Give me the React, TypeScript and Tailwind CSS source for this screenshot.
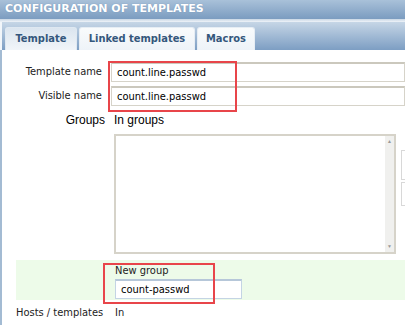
import React from 'react';

const Input: React.FC<{ value: string; className?: string }> = ({ value, className }) => (
  <div
    className={
      'flex h-[20px] items-center border border-t-2 pl-[5px] text-[11px] leading-none text-black ' +
      (className ?? 'border-[#d6d3c9] border-t-[#cbc8bd]')
    }
  >
    {value}
  </div>
);

const Tab: React.FC<{ label: string; active?: boolean; className?: string }> = ({ label, active, className }) => (
  <div
    className={
      'flex h-[23px] items-center justify-center rounded-t-[3px] border border-b-0 text-[11px] font-bold text-[#34577c] ' +
      (active
        ? 'border-[#dfe8f1] bg-gradient-to-b from-[#dbe5ef] to-[#f1f5f9] '
        : 'border-[#e6edf4] bg-gradient-to-b from-[#f9fbfc] to-[#eef3f8] ') +
      (className ?? '')
    }
  >
    {label}
  </div>
);

export default function App() {
  return (
    <div className="relative h-[325px] w-[405px] overflow-hidden bg-white font-['DejaVu_Sans_Condensed','DejaVu_Sans',sans-serif]">
      {/* title bar */}
      <div className="flex h-[19px] items-center bg-gradient-to-b from-[#a9c1d9] to-[#7b9cc0] pl-[5px] font-['DejaVu_Sans',sans-serif] text-[11px] font-bold text-white [text-shadow:0_0_1px_#6b8bb0]">
        CONFIGURATION OF TEMPLATES
      </div>
      <div className="h-[3px] bg-gradient-to-b from-[#c9d7e5] to-[#eef3f8]" />

      {/* tabs */}
      <div className="flex h-[28px] items-end gap-[2px] border-l-2 border-[#f2f6fa] bg-gradient-to-b from-[#c6d6e6] to-[#7d9ec3] pl-[3px]">
        <Tab label="Template" active className="w-[72px]" />
        <Tab label="Linked templates" className="w-[116px]" />
        <Tab label="Macros" className="w-[58px]" />
      </div>

      {/* form */}
      <div className="relative h-[280px] border-l-2 border-[#a3bbd3] pt-[12px] text-[11px] text-[#222]">
        <div className="flex h-[20px] items-center">
          <div className="w-[102px] text-right">Template name</div>
          <Input value="count.line.passwd" className="ml-[9px] w-[300px] border-[#d6d3c9] border-t-[#cbc8bd] bg-white" />
        </div>
        <div className="mt-[4px] flex h-[20px] items-center">
          <div className="w-[102px] text-right">Visible name</div>
          <Input value="count.line.passwd" className="ml-[9px] w-[300px] border-[#d6d3c9] border-t-[#cbc8bd] bg-white" />
        </div>

        <div className="mt-[6px] flex font-['Liberation_Sans',sans-serif] text-[12px] leading-[16px] text-black">
          <div className="w-[104px] text-right">Groups</div>
          <div className="ml-[9px] flex flex-col">
            <div>In groups</div>
            <div className="mt-[6px] flex h-[120px] w-[282px] border-2 border-[#d6d3c9] bg-white">
              <div className="flex-1" />
              <div className="flex w-[9px] flex-col items-center justify-between bg-[#f0f0ee] py-[3px] text-[5px] leading-none text-[#999]">
                <span>▲</span>
                <span>▼</span>
              </div>
            </div>
          </div>
          <div className="ml-[5px] mt-[38px] flex flex-col gap-[2px]">
            <div className="h-[30px] w-[4px] border border-r-0 border-[#d8d8d8]" />
            <div className="h-[24px] w-[4px] border border-r-0 border-[#d8d8d8]" />
          </div>
        </div>

        {/* new group */}
        <div className="ml-[14px] mt-[6px] flex h-[40px] flex-col bg-[#edfbe9] pl-[99px] pt-[4px]">
          <div className="text-[11px] leading-[14px] text-[#222]">New group</div>
          <Input value="count-passwd" className="mt-[1px] w-[127px] border-[#c4d4e4] border-t-[#b6c7d9] bg-white" />
        </div>

        <div className="mt-[6px] flex text-[11px] leading-[14px]">
          <div className="ml-[14px] w-[90px] whitespace-nowrap">Hosts / templates</div>
          <div className="ml-[9px]">In</div>
        </div>

        {/* annotation boxes */}
        <div className="absolute left-[106px] top-[11px] h-[51px] w-[129px] border-2 border-[#e8454a]" />
        <div className="absolute left-[101px] top-[213px] h-[41px] w-[112px] border-2 border-[#e8454a]" />
      </div>
    </div>
  );
}
